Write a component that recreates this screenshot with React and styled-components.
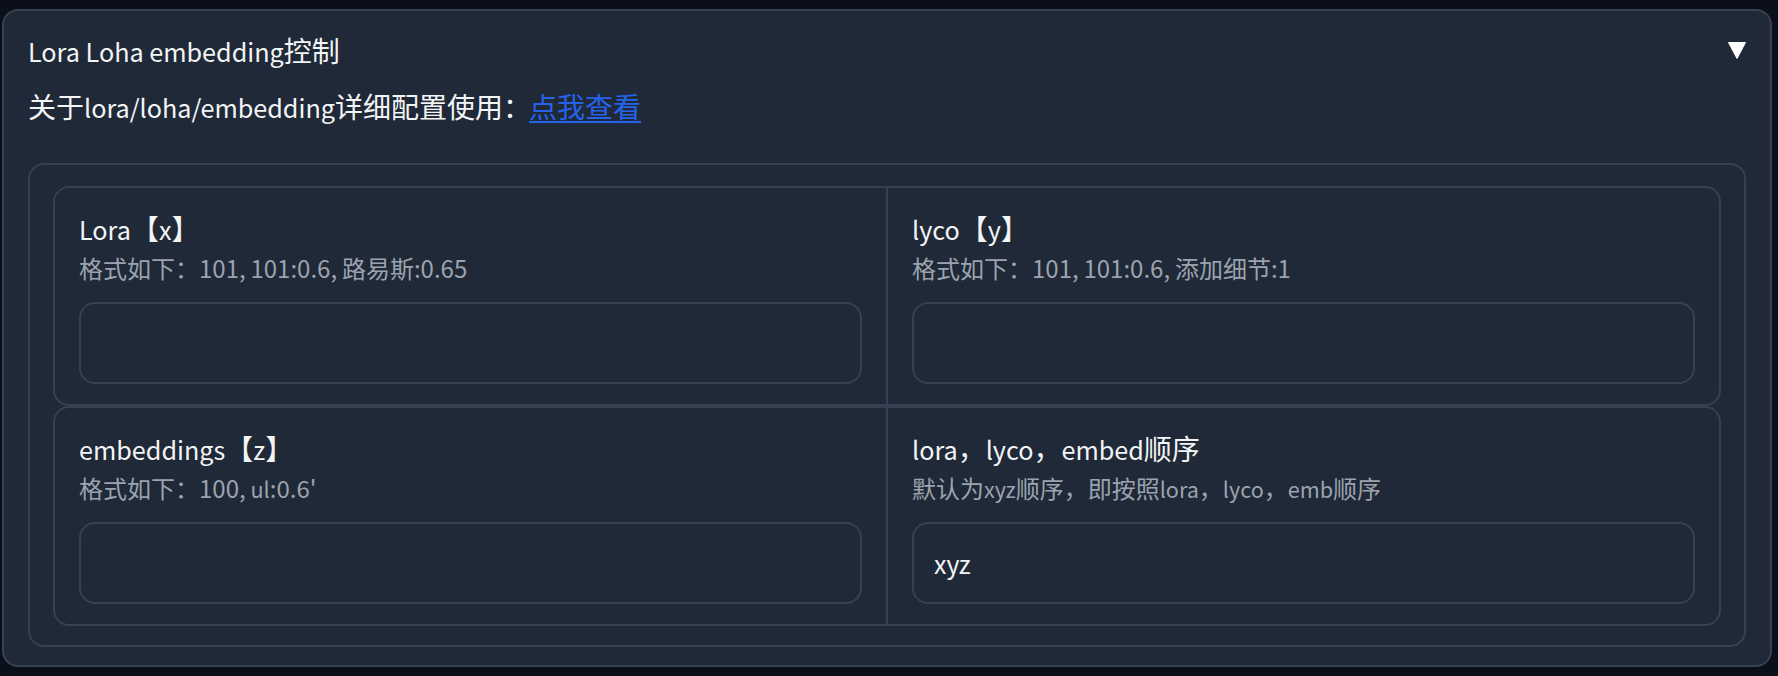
import React from 'react'
import styled, { createGlobalStyle } from 'styled-components'

const GlobalStyle = createGlobalStyle`
  html, body {
    margin: 0;
    background: #0b0f19;
  }
  body {
    font-family: "Noto Sans CJK SC", "Noto Sans", sans-serif;
    color: #f3f4f6;
  }
  * {
    box-sizing: border-box;
  }
`

const fields = [
  [
    { label: 'Lora【x】', info: '格式如下：101, 101:0.6, 路易斯:0.65', value: '' },
    { label: 'lyco【y】', info: '格式如下：101, 101:0.6, 添加细节:1', value: '' },
  ],
  [
    { label: 'embeddings【z】', info: "格式如下：100, ul:0.6'", value: '' },
    { label: 'lora，lyco，embed顺序', info: '默认为xyz顺序，即按照lora，lyco，emb顺序', value: 'xyz' },
  ],
]

// latin letters in the CJK font run wider than the original, so shrink them a bit
const LATIN = /([A-Za-z /]+)/
function Mixed({ text }) {
  return text.split(LATIN).map((part, i) =>
    i % 2 === 1 ? <Latin key={i}>{part}</Latin> : part
  )
}

export default function App() {
  return (
    <Page>
      <GlobalStyle />
      <Panel>
        <Header>
          <span><Mixed text="Lora Loha embedding控制" /></span>
          <svg width="18" height="17" viewBox="0 0 18 17">
            <polygon points="0.5,0.5 17.5,0.5 9,16.5" fill="#ffffff" strokeLinejoin="round" stroke="#ffffff" strokeWidth="1" />
          </svg>
        </Header>
        <Intro>
          <Mixed text="关于lora/loha/embedding详细配置使用：" />
          <a href="#">点我查看</a>
        </Intro>
        <Box>
          {fields.map((row, i) => (
            <FormRow key={i}>
              {row.map((f) => (
                <Field key={f.label}>
                  <Label><Mixed text={f.label} /></Label>
                  <Info><Mixed text={f.info} /></Info>
                  <Input type="text" defaultValue={f.value} />
                </Field>
              ))}
            </FormRow>
          ))}
        </Box>
      </Panel>
    </Page>
  )
}

const Page = styled.div`
  padding: 9px 6px 0 2px;
`

const Panel = styled.div`
  background: #1f2937;
  border: 2px solid #374151;
  border-radius: 16px;
  padding: 18px 24px 18px;
`

const Latin = styled.span`
  font-size: 0.9em;
  line-height: 1;
`

const Header = styled.div`
  display: flex;
  align-items: center;
  justify-content: space-between;
  height: 42px;
  font-size: 28px;
  line-height: 42px;
  color: #f3f4f6;
`

const Intro = styled.div`
  margin-top: 14px;
  font-size: 28px;
  line-height: 42px;
  color: #f3f4f6;

  a {
    margin-left: -2px;
    color: #2563eb;
    text-decoration: underline;
    text-underline-offset: 3px;
  }
`

const Box = styled.div`
  margin-top: 36px;
  border: 2px solid #374151;
  border-radius: 16px;
  padding: 21px 23px 19px;
`

const FormRow = styled.div`
  display: grid;
  grid-template-columns: 1fr 1fr;
  gap: 2px;
  background: #374151;
  border: 2px solid #374151;
  border-radius: 16px;
  overflow: hidden;
`

const Field = styled.div`
  display: flex;
  flex-direction: column;
  background: #1f2937;
  padding: 20px 24px;
`

const Label = styled.div`
  font-size: 28px;
  line-height: 40px;
  color: #f3f4f6;
`

const Info = styled.div`
  margin-top: 3px;
  font-size: 24px;
  line-height: 34px;
  color: #9ca3af;
`

const Input = styled.input`
  margin-top: 17px;
  height: 82px;
  width: 100%;
  border: 2px solid #374151;
  border-radius: 16px;
  background: #1f2937;
  padding: 0 20px;
  font-family: "Noto Sans CJK SC", "Noto Sans", sans-serif;
  font-size: 25px;
  color: #f3f4f6;
  outline: none;
`
